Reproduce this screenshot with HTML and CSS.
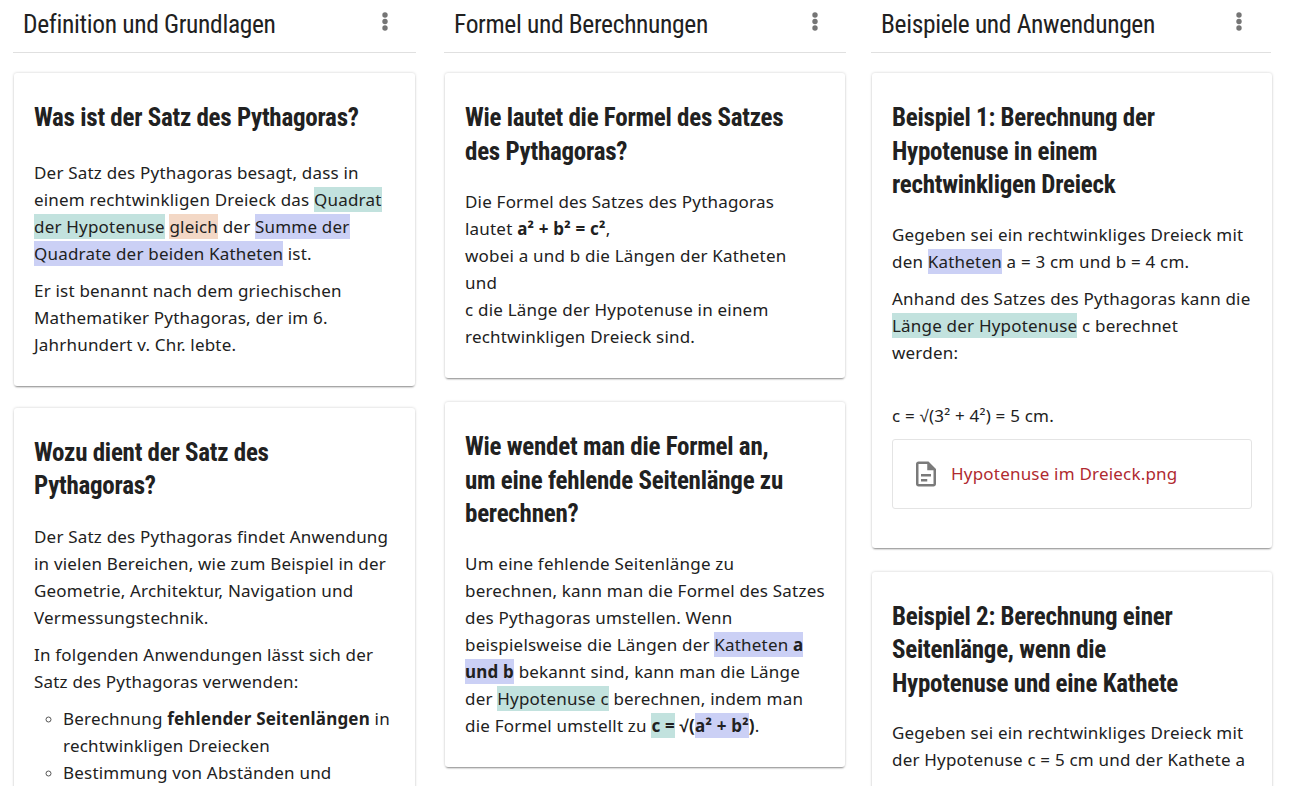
FILE: index.html
```html
<!DOCTYPE html>
<html lang="de">
<head>
    <meta charset="UTF-8">
    <title>Satz des Pythagoras</title>
    <link rel="stylesheet" href="styles.css">
</head>
<body>
    <div class="board">
        <section class="column">
            <header class="column-head">
                <h2>Definition und Grundlagen</h2>
                <svg class="menu-icon" viewBox="0 0 6 19"><circle cx="3" cy="3" r="2.7"/><circle cx="3" cy="9.5" r="2.7"/><circle cx="3" cy="16" r="2.7"/></svg>
            </header>
            <article class="card card-lead">
                <h3>Was ist der Satz des Pythagoras?</h3>
                <p>Der Satz des Pythagoras besagt, dass in<br>einem rechtwinkligen Dreieck das <span class="mark-teal">Quadrat<br>der Hypotenuse</span> <span class="mark-orange">gleich</span> der <span class="mark-blue">Summe der<br>Quadrate der beiden Katheten</span> ist.</p>
                <p>Er ist benannt nach dem griechischen<br>Mathematiker Pythagoras, der im 6.<br>Jahrhundert v. Chr. lebte.</p>
            </article>
            <article class="card card-open">
                <h3>Wozu dient der Satz des<br>Pythagoras?</h3>
                <p>Der Satz des Pythagoras findet Anwendung<br>in vielen Bereichen, wie zum Beispiel in der<br>Geometrie, Architektur, Navigation und<br>Vermessungstechnik.</p>
                <p>In folgenden Anwendungen lässt sich der<br>Satz des Pythagoras verwenden:</p>
                <ul>
                    <li>Berechnung <b>fehlender Seitenlängen</b> in<br>rechtwinkligen Dreiecken</li>
                    <li>Bestimmung von Abständen und</li>
                </ul>
            </article>
        </section>

        <section class="column column-mid">
            <header class="column-head">
                <h2>Formel und Berechnungen</h2>
                <svg class="menu-icon" viewBox="0 0 6 19"><circle cx="3" cy="3" r="2.7"/><circle cx="3" cy="9.5" r="2.7"/><circle cx="3" cy="16" r="2.7"/></svg>
            </header>
            <article class="card">
                <h3>Wie lautet die Formel des Satzes<br>des Pythagoras?</h3>
                <p>Die Formel des Satzes des Pythagoras<br>lautet <b>a² + b² = c²</b>,<br>wobei a und b die Längen der Katheten<br>und<br>c die Länge der Hypotenuse in einem<br>rechtwinkligen Dreieck sind.</p>
            </article>
            <article class="card">
                <h3 class="title-long">Wie wendet man die Formel an,<br>um eine fehlende Seitenlänge zu<br>berechnen?</h3>
                <p>Um eine fehlende Seitenlänge zu<br>berechnen, kann man die Formel des Satzes<br>des Pythagoras umstellen. Wenn<br>beispielsweise die Längen der <span class="mark-blue">Katheten <b>a<br>und b</b></span> bekannt sind, kann man die Länge<br>der <span class="mark-teal">Hypotenuse c</span> berechnen, indem man<br>die Formel umstellt zu <b><span class="mark-teal">c =</span> √(<span class="mark-blue">a² + b²</span>)</b>.</p>
            </article>
        </section>

        <section class="column column-last">
            <header class="column-head">
                <h2>Beispiele und Anwendungen</h2>
                <svg class="menu-icon" viewBox="0 0 6 19"><circle cx="3" cy="3" r="2.7"/><circle cx="3" cy="9.5" r="2.7"/><circle cx="3" cy="16" r="2.7"/></svg>
            </header>
            <article class="card">
                <h3 class="title-long">Beispiel 1: Berechnung der<br>Hypotenuse in einem<br>rechtwinkligen Dreieck</h3>
                <p>Gegeben sei ein rechtwinkliges Dreieck mit<br>den <span class="mark-blue">Katheten</span> a = 3 cm und b = 4 cm.</p>
                <p>Anhand des Satzes des Pythagoras kann die<br><span class="mark-teal">Länge der Hypotenuse</span> c berechnet<br>werden:</p>
                <p class="formula">c = √(3² + 4²) = 5 cm.</p>
                <div class="attachment">
                    <svg class="file-icon" viewBox="0 0 24 24"><path d="M8 16h5v2H8zm0-4h8v2H8zm6-10H6c-1.1 0-2 .9-2 2v16c0 1.1.89 2 1.99 2H18c1.1 0 2-.9 2-2V8l-6-6zm4 18H6V4h7v5h5v11z"/></svg>
                    <span>Hypotenuse im Dreieck.png</span>
                </div>
            </article>
            <article class="card card-open">
                <h3 class="title-long">Beispiel 2: Berechnung einer<br>Seitenlänge, wenn die<br>Hypotenuse und eine Kathete</h3>
                <p>Gegeben sei ein rechtwinkliges Dreieck mit<br>der Hypotenuse c = 5 cm und der Kathete a</p>
            </article>
        </section>
    </div>
</body>
</html>
```

FILE: styles.css
```css
html, body {
    margin: 0;
    height: 795px;
    overflow: hidden;
    background: #fff;
}
body {
    font-family: "Noto Sans", sans-serif;
    font-size: 17px;
    letter-spacing: 0.2px;
    line-height: 27px;
    color: #212121;
}
/* the board scrolls in the real app, here it just stops short of the window edge */
.board {
    display: grid;
    grid-template-columns: 431px 427px 402px;
    height: 786px;
    padding-left: 13px;
    overflow: hidden;
}
.column {
    padding-right: 28px;
}
.column-mid {
    padding-right: 25px;
}
.column-last {
    padding-right: 0;
}
.column-head {
    display: flex;
    justify-content: space-between;
    align-items: flex-start;
    height: 52px;
    padding: 0 28px 0 10px;
    border-bottom: 1px solid #e0e0e0;
}
.column-last .column-head {
    margin-right: 2px;
    padding-right: 29px;
}
.column-head h2 {
    margin: 6px 0 0;
    font-family: "Roboto", sans-serif;
    font-stretch: 75%;
    font-size: 25.5px;
    letter-spacing: -0.35px;
    line-height: 36px;
    font-weight: 400;
}
.menu-icon {
    width: 6px;
    height: 19px;
    margin-top: 12px;
    fill: #757575;
}
.card {
    margin: 20px 1px 24px;
    padding: 28px 20px;
    background: #fff;
    border-radius: 3px;
    box-shadow: 0 2px 2px -1px rgba(0, 0, 0, 0.4), 0 0 3px rgba(0, 0, 0, 0.2);
}
.card-lead {
    margin-bottom: 22px;
}
.card-open {
    padding-bottom: 80px;
}
.card h3 {
    margin: 0 0 20px;
    font-family: "Roboto", sans-serif;
    font-stretch: 75%;
    font-size: 25px;
    letter-spacing: -0.25px;
    line-height: 33.5px;
    font-weight: 700;
}
.card h3.title-long {
    margin-bottom: 19px;
}
.card-lead h3 {
    margin-bottom: 24px;
}
.card p {
    margin: 0 0 10px;
    white-space: nowrap;
}
.card p:last-child {
    margin-bottom: 0;
}
.card ul {
    margin: 10px 0 0;
    padding-left: 29px;
    list-style: circle;
}
.card li::marker {
    font-size: 14px;
    color: #555;
}
.mark-teal, .mark-orange, .mark-blue {
    padding: 1px 0;
}
.mark-teal {
    background: #c2e2de;
}
.mark-orange {
    background: #f3d8c6;
}
.mark-blue {
    background: #cbd0f5;
}
.formula {
    padding-top: 26px;
}
.attachment {
    display: flex;
    align-items: center;
    gap: 10px;
    height: 68px;
    margin: 4px 0 11px;
    padding-left: 18px;
    border: 1px solid #e4e4e4;
    border-radius: 3px;
    color: #b02a30;
}
.file-icon {
    width: 30px;
    height: 30px;
    fill: #7a7a7a;
}
```
